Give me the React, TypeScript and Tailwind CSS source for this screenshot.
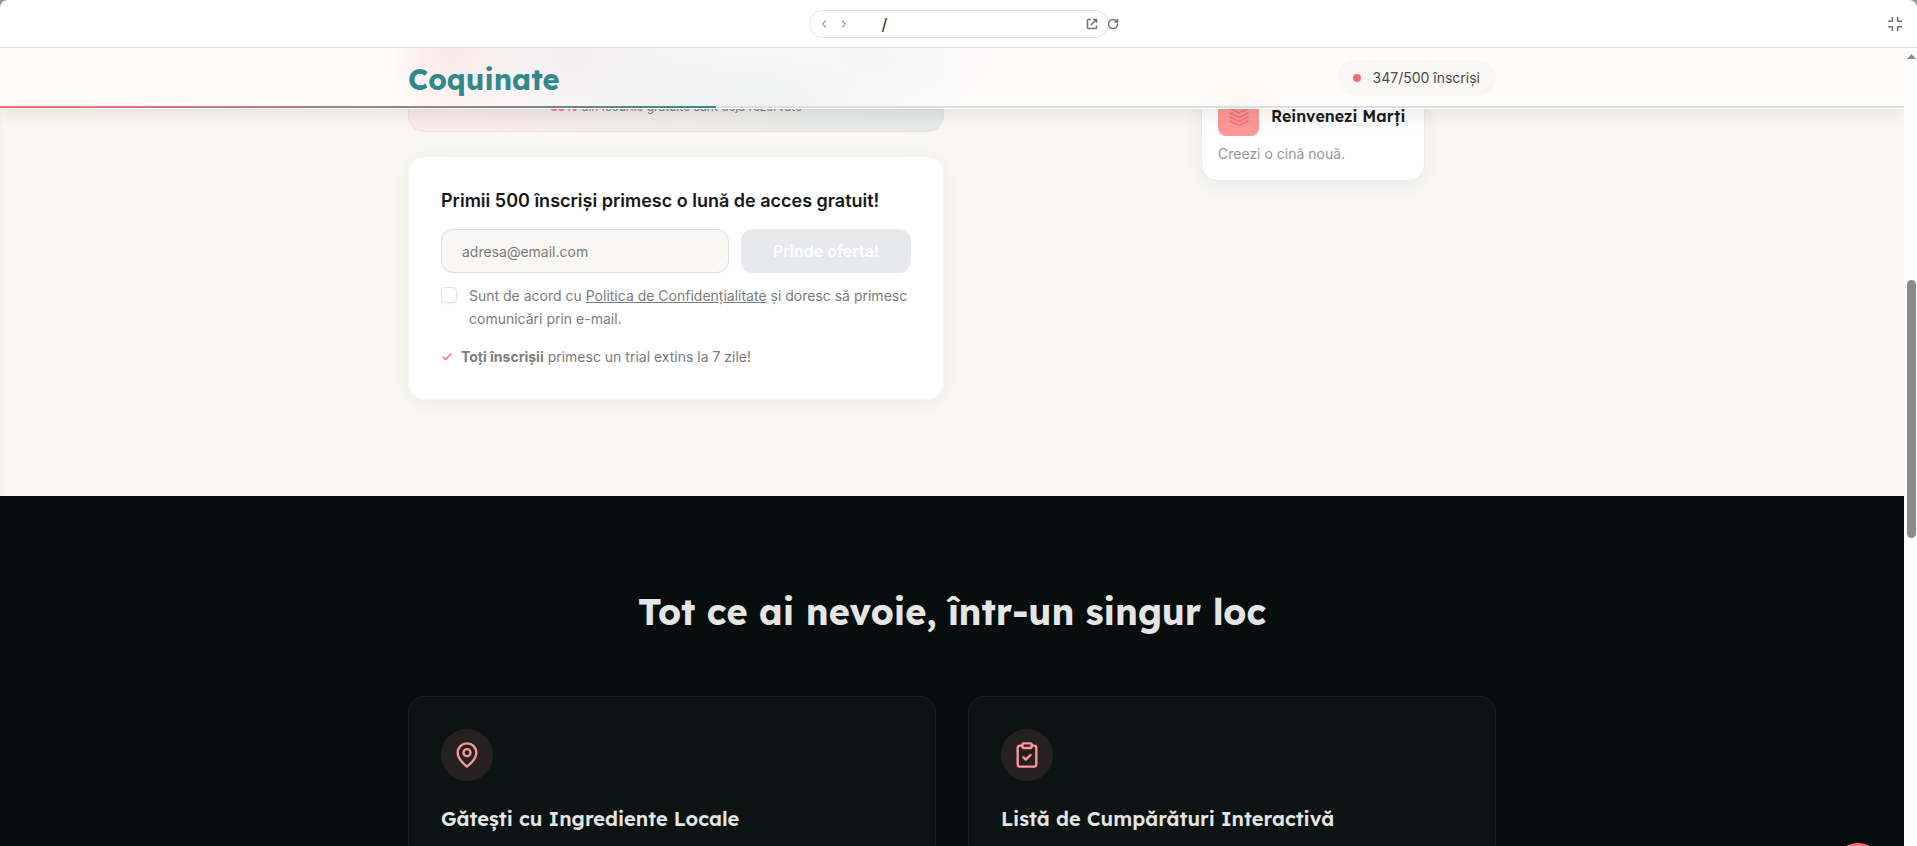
import { Check, ChevronLeft, ChevronRight, RotateCw } from "lucide-react";
import type { ReactNode } from "react";

const display = "font-['Lexend','Noto_Sans',sans-serif]";

function BrowserBar() {
  return (
    <div className="flex h-12 shrink-0 items-center rounded-t-lg border-b border-[#e4e4e7] bg-white px-[15px]">
      <div className="flex-1" />
      <div className="flex items-center">
        <div className="flex h-7 w-[300px] items-center rounded-full border border-[#e4e4e7] pr-2.5 pl-1 text-[#a1a1aa]">
          <button aria-label="Înapoi" className="flex w-5 justify-center">
            <ChevronLeft size={12} strokeWidth={2.5} />
          </button>
          <button aria-label="Înainte" className="flex w-5 justify-center">
            <ChevronRight size={12} strokeWidth={2.5} />
          </button>
          <input
            aria-label="Adresă"
            defaultValue="/"
            className="ml-7 min-w-0 flex-1 bg-transparent text-base text-[#18181b] outline-none"
          />
          <button aria-label="Deschide într-o filă nouă" className="text-[#71717a]">
            <svg width="12" height="12" viewBox="0 0 12 12" fill="none" stroke="currentColor" strokeWidth="1.5">
              <path d="M5 1.5H2.2a.7.7 0 0 0-.7.7v7.6c0 .4.3.7.7.7h7.6c.4 0 .7-.3.7-.7V7.5" />
              <path d="M7 1.5h3.5V5M10.5 1.5 5 7" />
            </svg>
          </button>
        </div>
        <button aria-label="Reîncarcă" className="-mr-2.5 -ml-0.5 w-3 text-[#71717a]">
          <RotateCw size={12} strokeWidth={3} />
        </button>
      </div>
      <div className="flex flex-1 justify-end">
        <button aria-label="Ieși din ecran complet" className="text-[#71717a]">
          <svg width="14" height="14" viewBox="0 0 14 14" fill="none" stroke="currentColor" strokeWidth="1.5">
            <path d="M0 4.3h4.3V0M9.7 0v4.3H14M0 9.7h4.3V14M9.7 14V9.7H14" />
          </svg>
        </button>
      </div>
    </div>
  );
}

function SiteHeader() {
  return (
    <header className="absolute inset-x-0 top-0 z-10 border-b border-white bg-[#fefdfc] bg-[radial-gradient(70px_90px_at_450px_0px,#fbe9e8_0%,transparent_100%),radial-gradient(180px_110px_at_570px_10px,#f1efef_0%,transparent_100%),radial-gradient(160px_60px_at_740px_60px,#eff2f1_0%,transparent_100%),radial-gradient(220px_120px_at_760px_20px,#f6f6f6_0%,transparent_100%),radial-gradient(140px_70px_at_870px_10px,#f6f4f4_0%,transparent_100%),radial-gradient(50px_40px_at_1240px_60px,#fdf5f4_0%,transparent_100%)] shadow-[0_4px_20px_rgba(0,0,0,0.10)]">
      <div className="mx-auto flex h-[58px] max-w-6xl items-center justify-between px-8 pt-0.5">
        <a href="#" className={`${display} pt-0.5 text-[29px] leading-10 font-bold text-[#31898b]`}>
          Coquinate
        </a>
        <div className="flex h-9 items-center gap-3 rounded-full bg-[#f9f8f4] px-4 text-sm text-[#4b4b4b]">
          <span className="size-2 rounded-full bg-[#fb6a70]" />
          347/500 înscriși
        </div>
      </div>
      <div className="h-0.5 bg-[#dededd]">
        <div className="h-full w-[37.6%] bg-linear-to-r from-[#fb6a70] to-[#31898b]" />
      </div>
    </header>
  );
}

function SignupCard() {
  return (
    <form className="rounded-2xl border border-[#f4f3f1] bg-white p-8 shadow-[0_4px_24px_rgba(0,0,0,0.06)]">
      <h2 className="text-lg leading-6 font-semibold text-[#171717]">
        Primii 500 înscriși primesc o lună de acces gratuit!
      </h2>
      <div className="mt-4 flex gap-3">
        <input
          type="email"
          aria-label="Adresa de email"
          placeholder="adresa@email.com"
          className="h-11 min-w-0 flex-1 rounded-xl border border-[#dddddc] bg-[#f9f8f4] px-5 text-sm placeholder:text-[#7c7c7a]"
        />
        <button
          type="button"
          disabled
          className="h-11 w-[170px] rounded-xl bg-[#e8e9ed] text-base font-semibold text-white"
        >
          Prinde oferta!
        </button>
      </div>
      <label className="mt-[11px] flex gap-3 text-sm leading-[23px] text-[#7c7c7c]">
        <input
          type="checkbox"
          className="mt-[3px] size-4 shrink-0 appearance-none rounded-sm border border-[#e2e3e6] bg-white shadow-xs"
        />
        <span>
          Sunt de acord cu{" "}
          <a href="#" className="underline">
            Politica de Confidențialitate
          </a>{" "}
          și doresc să primesc comunicări prin e-mail.
        </span>
      </label>
      <p className="mt-[17px] flex items-center gap-2 text-sm leading-5 text-[#7c7c7c]">
        <Check size={12} strokeWidth={3} className="text-[#fb6a70]" />
        <span>
          <strong className="font-bold">Toți înscrișii</strong> primesc un trial extins la 7 zile!
        </span>
      </p>
    </form>
  );
}

function Hero() {
  return (
    <section className="bg-[#f9f8f4] pb-24 shadow-[inset_6px_0_8px_-8px_rgba(0,0,0,0.06)]">
      <div className="mx-auto flex max-w-6xl items-start px-8">
        <div className="w-[536px] shrink-0">
          <div className="flex h-[84px] items-end justify-center rounded-2xl border border-[#f5dcda] bg-linear-to-r from-[#fbebea] via-[#f0ecea] to-[#e3ecea] pb-4">
            <p className="text-xs leading-4 text-[#7c7c7c]">
              <strong className="font-bold text-[#fb6a70]">69%</strong> din locurile gratuite sunt deja rezervate
            </p>
          </div>
          <div className="mt-6">
            <SignupCard />
          </div>
        </div>
        <article className="ml-[257px] w-[224px] rounded-2xl border border-[#e9e9ea] bg-white p-4 pt-[46px] shadow-[0_4px_20px_rgba(0,0,0,0.06)]">
          <div className="flex items-center gap-3">
            <Layers />
            <h3 className={`${display} leading-5 font-semibold whitespace-nowrap text-[#1b1b1b]`}>Reinvenezi Marți</h3>
          </div>
          <p className="mt-2 text-sm leading-5 text-[#979797]">Creezi o cină nouă.</p>
        </article>
      </div>
    </section>
  );
}

function Layers() {
  return (
    <span className="flex size-[41px] shrink-0 items-center justify-center rounded-lg bg-[#fd9896] text-[#fb6f74]">
      <svg width="20" height="24" viewBox="0 0 20 24" fill="none" stroke="currentColor" strokeWidth="1.5" strokeLinejoin="round" strokeLinecap="round">
        <path d="m10 0 9 4.5-9 4.5-9-4.5ZM1 9l9 4.5 9-4.5M1 13l9 4.5 9-4.5M1 17l9 4.5 9-4.5" />
      </svg>
    </span>
  );
}

function Feature({ title, children }: { title: string; children: ReactNode }) {
  return (
    <article className="h-72 rounded-2xl border border-[#1c2323] bg-[#0c1413] p-8">
      <div className="flex size-[52px] items-center justify-center rounded-full bg-[#262120] text-[#fd9896]">
        <svg width="28" height="28" viewBox="0 0 24 24" fill="none" stroke="currentColor" strokeWidth="2" strokeLinecap="round" strokeLinejoin="round">
          {children}
        </svg>
      </div>
      <h3 className={`${display} mt-6 text-xl leading-7 font-semibold text-[#e5e5e5]`}>{title}</h3>
    </article>
  );
}

function Features() {
  return (
    <section className="bg-[#070d0c] pt-24">
      <div className="mx-auto max-w-6xl px-8">
        <h2 className={`${display} text-center text-4xl leading-10 font-bold text-[#e5e5e5]`}>
          Tot ce ai nevoie, într-un singur loc
        </h2>
        <div className="mt-16 grid grid-cols-2 gap-8">
          <Feature title="Gătești cu Ingrediente Locale">
            <path d="M20 10c0 6-8 12-8 12s-8-6-8-12a8 8 0 0 1 16 0Z" />
            <circle cx="12" cy="10" r="3" />
          </Feature>
          <Feature title="Listă de Cumpărături Interactivă">
            <rect x="8" y="2" width="8" height="4" rx="1" />
            <path d="M16 4h2a2 2 0 0 1 2 2v14a2 2 0 0 1-2 2H6a2 2 0 0 1-2-2V6a2 2 0 0 1 2-2h2" />
            <path d="m9 14 2 2 4-4" />
          </Feature>
        </div>
      </div>
    </section>
  );
}

export default function App() {
  return (
    <div className="flex h-screen flex-col overflow-hidden bg-[#9a9a9a] font-['Inter',sans-serif]">
      <BrowserBar />
      <div className="flex min-h-0 flex-1">
        <main className="relative min-w-0 flex-1 overflow-hidden bg-[#070d0c]">
          <SiteHeader />
          <Hero />
          <Features />
          <button
            aria-label="Deschide chat"
            className="absolute right-[22px] -bottom-[45px] size-12 rounded-full bg-linear-to-r from-[#fd5f7c] to-[#fb7068]"
          />
        </main>
        <div className="flex w-[13px] shrink-0 flex-col items-end bg-[#fcfcfc] pt-1.5 pr-px">
          <svg width="9" height="5" viewBox="0 0 9 5" fill="#8b8b8b">
            <path d="M4.5 0 9 5H0Z" />
          </svg>
          <div className="mt-[221px] h-[258px] w-[9px] rounded-full bg-[#8b8b8b]" />
        </div>
      </div>
    </div>
  );
}
